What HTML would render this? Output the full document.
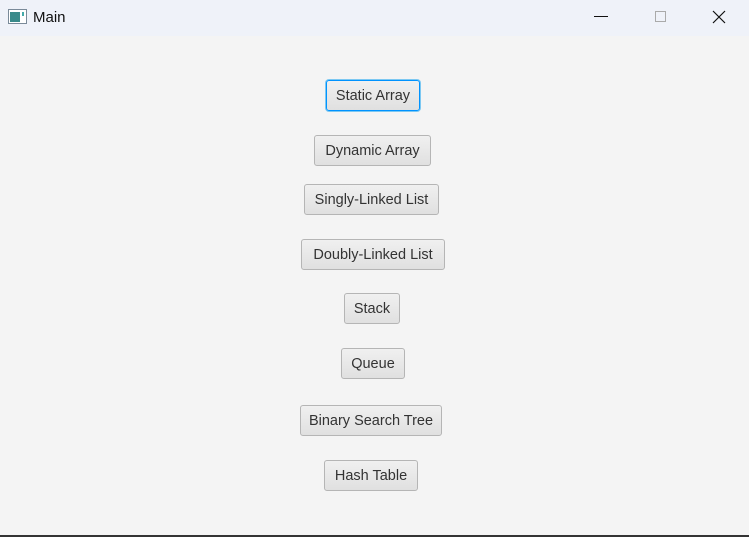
<!DOCTYPE html><html><head><style>
body{margin:0;width:749px;height:537px;background:#f4f4f4;position:relative;overflow:hidden;font-family:"Liberation Sans",sans-serif}
.tb{position:absolute;left:0;top:0;width:749px;height:36px;background:#eff2f9}
.tb .t{position:absolute;left:33px;top:9px;font-size:15px;color:#111}
.b{position:absolute;height:31px;box-sizing:border-box;border:1px solid #b5b5b5;border-radius:3px;background:linear-gradient(#f0f0f0,#e0e0e0);font-size:14.5px;color:#333;text-align:center;line-height:30px}
.f{border:1px solid #0093ff;box-shadow:0 0 0 1px #7cc8f2}
</style></head><body>
<div class="tb">
<svg style="position:absolute;left:8px;top:9px" width="19" height="15"><rect x="0.5" y="0.5" width="18" height="14" fill="#fff" stroke="#7a8a99"/><rect x="2" y="3" width="10" height="10" fill="#3a8a8a"/><rect x="14" y="3" width="2" height="4" fill="#4aa"/></svg>
<div class="t">Main</div>
<svg style="position:absolute;left:594px;top:10px" width="140" height="14"><line x1="0" y1="6.5" x2="14" y2="6.5" stroke="#111"/><rect x="61.5" y="1.5" width="10" height="10" fill="none" stroke="#aaa"/><path d="M119 1 L131 13 M131 1 L119 13" stroke="#111" stroke-width="1.2"/></svg>
</div>
<div class="b f" style="left:326px;top:80px;width:94px">Static Array</div>
<div class="b" style="left:314px;top:135px;width:117px">Dynamic Array</div>
<div class="b" style="left:304px;top:184px;width:135px">Singly-Linked List</div>
<div class="b" style="left:301px;top:239px;width:144px">Doubly-Linked List</div>
<div class="b" style="left:344px;top:293px;width:56px">Stack</div>
<div class="b" style="left:341px;top:348px;width:64px">Queue</div>
<div class="b" style="left:300px;top:405px;width:142px">Binary Search Tree</div>
<div class="b" style="left:324px;top:460px;width:94px">Hash Table</div>
<div style="position:absolute;left:0;top:535px;width:749px;height:2px;background:#333"></div>
</body></html>
